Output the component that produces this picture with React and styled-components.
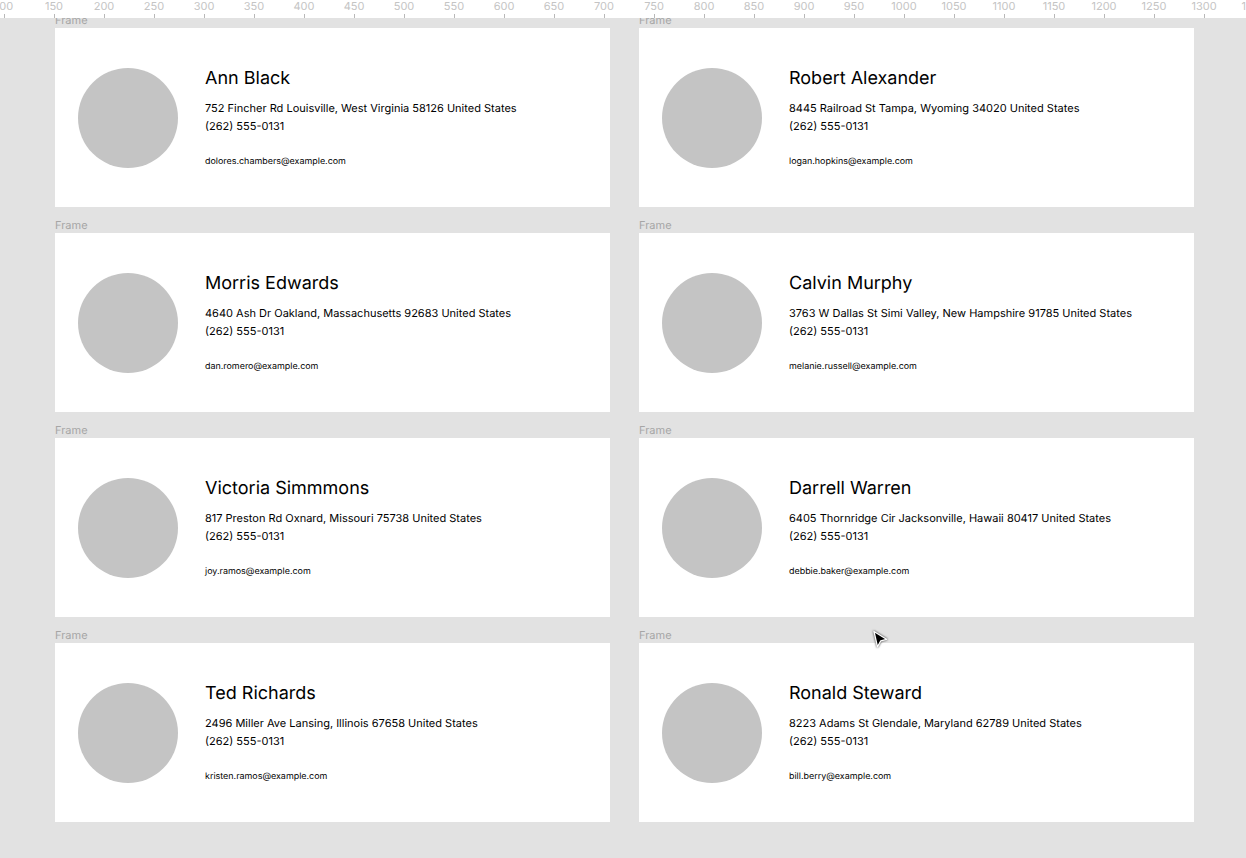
import React from "react";
import styled, { createGlobalStyle } from "styled-components";

const Global = createGlobalStyle`
  html, body { margin: 0; padding: 0; height: 100%; background: #e2e2e2; overflow: hidden; }
  body { font-family: Inter, "Liberation Sans", sans-serif; text-rendering: geometricPrecision; }
`;

const Page = styled.div`
  width: 1246px;
  height: 858px;
  display: flex;
  flex-direction: column;
  background: #e2e2e2;
  overflow: hidden;
  position: relative;
`;

const Ruler = styled.div`
  height: 18px;
  flex: none;
  background: #fff;
  display: flex;
  padding-left: 4px;
  position: relative;
  z-index: 2;
  overflow: hidden;
`;

const Tick = styled.div`
  flex: none;
  width: 50px;
  height: 18px;
  position: relative;
  &::after {
    content: "";
    position: absolute;
    left: 0;
    top: 14px;
    width: 1px;
    height: 4px;
    background: #b8b8b8;
  }
`;

const TickLabel = styled.span`
  position: absolute;
  left: 0;
  top: 0;
  transform: translateX(-50%);
  font-size: 11px;
  line-height: 13px;
  color: #c4c4c4;
`;

const Canvas = styled.div`
  display: grid;
  grid-template-columns: 555px 555px;
  column-gap: 29px;
  row-gap: 0;
  padding-left: 55px;
  margin-top: -16px;
`;

const Frame = styled.section`
  display: flex;
  flex-direction: column;
`;

const FrameLabel = styled.div`
  height: 26px;
  font-size: 11px;
  line-height: 13px;
  padding-top: 12px;
  box-sizing: border-box;
  color: #a6a6a6;
`;

const Card = styled.article`
  height: 179px;
  background: #fff;
  display: flex;
  align-items: flex-start;
  padding: 40px 0 0 23px;
  box-sizing: border-box;
`;

const Avatar = styled.div`
  flex: none;
  width: 100px;
  height: 100px;
  border-radius: 50%;
  background: #c4c4c4;
`;

const Info = styled.div`
  margin-left: 27px;
  display: flex;
  flex-direction: column;
  color: #000;
`;

const Name = styled.h2`
  margin: 0;
  font-size: 18px;
  font-weight: 400;
  line-height: 22px;
`;

const Address = styled.p`
  margin: 9px 0 0;
  font-size: 11px;
  line-height: 18px;
`;

const Email = styled.p`
  margin: 21px 0 0;
  font-size: 8.94px;
  line-height: 11px;
`;

const Cursor = styled.svg`
  position: absolute;
  left: 871px;
  top: 629px;
  z-index: 3;
  filter: drop-shadow(0 0 1px rgba(0, 0, 0, 0.8));
`;

const people = [
  ["Ann Black", "752 Fincher Rd Louisville, West Virginia 58126 United States", "dolores.chambers@example.com"],
  ["Robert Alexander", "8445 Railroad St Tampa, Wyoming 34020 United States", "logan.hopkins@example.com"],
  ["Morris Edwards", "4640 Ash Dr Oakland, Massachusetts 92683 United States", "dan.romero@example.com"],
  ["Calvin Murphy", "3763 W Dallas St Simi Valley, New Hampshire 91785 United States", "melanie.russell@example.com"],
  ["Victoria Simmmons", "817 Preston Rd Oxnard, Missouri 75738 United States", "joy.ramos@example.com"],
  ["Darrell Warren", "6405 Thornridge Cir Jacksonville, Hawaii 80417 United States", "debbie.baker@example.com"],
  ["Ted Richards", "2496 Miller Ave Lansing, Illinois 67658 United States", "kristen.ramos@example.com"],
  ["Ronald Steward", "8223 Adams St Glendale, Maryland 62789 United States", "bill.berry@example.com"],
];

const ticks = Array.from({ length: 26 }, (_, i) => 100 + i * 50);

export default function App() {
  return (
    <Page>
      <Global />
      <Ruler>
        {ticks.map((t) => (
          <Tick key={t}>
            <TickLabel>{t}</TickLabel>
          </Tick>
        ))}
      </Ruler>
      <Canvas>
        {people.map(([name, address, email]) => (
          <Frame key={name}>
            <FrameLabel>Frame</FrameLabel>
            <Card>
              <Avatar />
              <Info>
                <Name>{name}</Name>
                <Address>
                  {address}
                  <br />
                  (262) 555-0131
                </Address>
                <Email>{email}</Email>
              </Info>
            </Card>
          </Frame>
        ))}
      </Canvas>
      <Cursor width="18" height="21" viewBox="0 0 18 21">
        <path d="M3 2.5 L15.5 10.3 L9.8 11.8 L6.5 17.8 Z" fill="#000" stroke="#fff" strokeWidth="1.3" strokeLinejoin="round" />
      </Cursor>
    </Page>
  );
}
